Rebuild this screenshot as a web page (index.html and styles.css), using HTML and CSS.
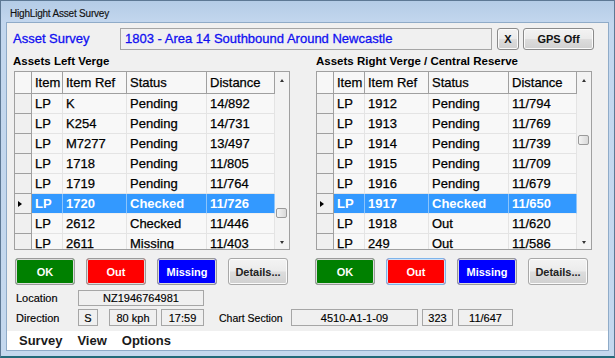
FILE: index.html
```html
<!DOCTYPE html>
<html lang="en">
<head>
<meta charset="utf-8">
<title>HighLight Asset Survey</title>
<link rel="stylesheet" href="styles.css">
</head>
<body>
<div class="window">
  <div class="titlebar"><span class="title">HighLight Asset Survey</span></div>
  <div class="client">
    <div class="toprow">
      <span class="survey-label">Asset Survey</span>
      <div class="survey-box">1803 - Area 14 Southbound Around Newcastle</div>
      <button class="btn btn-x">X</button>
      <button class="btn btn-gps">GPS Off</button>
    </div>

    <div class="panels">
      <section class="panel panel-left">
        <div class="panel-title">Assets Left Verge</div>
        <div class="grid">
          <div class="grid-view">
            <div class="grow ghead"><div class="rh"></div><div class="gc">Item</div><div class="gc">Item Ref</div><div class="gc">Status</div><div class="gc">Distance</div></div>
            <div class="grow"><div class="rh"></div><div class="gc">LP</div><div class="gc">K</div><div class="gc">Pending</div><div class="gc">14/892</div></div>
            <div class="grow"><div class="rh"></div><div class="gc">LP</div><div class="gc">K254</div><div class="gc">Pending</div><div class="gc">14/731</div></div>
            <div class="grow"><div class="rh"></div><div class="gc">LP</div><div class="gc">M7277</div><div class="gc">Pending</div><div class="gc">13/497</div></div>
            <div class="grow"><div class="rh"></div><div class="gc">LP</div><div class="gc">1718</div><div class="gc">Pending</div><div class="gc">11/805</div></div>
            <div class="grow"><div class="rh"></div><div class="gc">LP</div><div class="gc">1719</div><div class="gc">Pending</div><div class="gc">11/764</div></div>
            <div class="grow selected"><div class="rh"><span class="cur"></span></div><div class="gc">LP</div><div class="gc">1720</div><div class="gc">Checked</div><div class="gc">11/726</div></div>
            <div class="grow"><div class="rh"></div><div class="gc">LP</div><div class="gc">2612</div><div class="gc">Checked</div><div class="gc">11/446</div></div>
            <div class="grow"><div class="rh"></div><div class="gc">LP</div><div class="gc">2611</div><div class="gc">Missing</div><div class="gc">11/403</div></div>
          </div>
          <div class="vscroll">
            <div class="sb-arrow"><span class="tri-up"></span></div>
            <div class="sb-track"><div class="sb-thumb" style="margin-top:119px"></div></div>
            <div class="sb-arrow"><span class="tri-down"></span></div>
          </div>
        </div>
        <div class="actions">
          <button class="sbtn ok">OK</button>
          <button class="sbtn out">Out</button>
          <button class="sbtn missing">Missing</button>
          <button class="btn details">Details...</button>
        </div>
      </section>

      <section class="panel panel-right">
        <div class="panel-title">Assets Right Verge / Central Reserve</div>
        <div class="grid">
          <div class="grid-view">
            <div class="grow ghead"><div class="rh"></div><div class="gc">Item</div><div class="gc">Item Ref</div><div class="gc">Status</div><div class="gc">Distance</div></div>
            <div class="grow"><div class="rh"></div><div class="gc">LP</div><div class="gc">1912</div><div class="gc">Pending</div><div class="gc">11/794</div></div>
            <div class="grow"><div class="rh"></div><div class="gc">LP</div><div class="gc">1913</div><div class="gc">Pending</div><div class="gc">11/769</div></div>
            <div class="grow"><div class="rh"></div><div class="gc">LP</div><div class="gc">1914</div><div class="gc">Pending</div><div class="gc">11/739</div></div>
            <div class="grow"><div class="rh"></div><div class="gc">LP</div><div class="gc">1915</div><div class="gc">Pending</div><div class="gc">11/709</div></div>
            <div class="grow"><div class="rh"></div><div class="gc">LP</div><div class="gc">1916</div><div class="gc">Pending</div><div class="gc">11/679</div></div>
            <div class="grow selected"><div class="rh"><span class="cur"></span></div><div class="gc">LP</div><div class="gc">1917</div><div class="gc">Checked</div><div class="gc">11/650</div></div>
            <div class="grow"><div class="rh"></div><div class="gc">LP</div><div class="gc">1918</div><div class="gc">Out</div><div class="gc">11/620</div></div>
            <div class="grow"><div class="rh"></div><div class="gc">LP</div><div class="gc">249</div><div class="gc">Out</div><div class="gc">11/586</div></div>
          </div>
          <div class="vscroll">
            <div class="sb-arrow"><span class="tri-up"></span></div>
            <div class="sb-track"><div class="sb-thumb" style="margin-top:46px"></div></div>
            <div class="sb-arrow"><span class="tri-down"></span></div>
          </div>
        </div>
        <div class="actions">
          <button class="sbtn ok">OK</button>
          <button class="sbtn out focus">Out</button>
          <button class="sbtn missing">Missing</button>
          <button class="btn details">Details...</button>
        </div>
      </section>
    </div>

    <div class="info-row row-location">
      <span class="info-label">Location</span>
      <span class="field f-location">NZ1946764981</span>
    </div>
    <div class="info-row row-direction">
      <span class="info-label">Direction</span>
      <span class="field f-dir">S</span>
      <span class="field f-speed">80 kph</span>
      <span class="field f-time">17:59</span>
      <span class="info-label chart-label">Chart Section</span>
      <span class="field f-chart">4510-A1-1-09</span>
      <span class="field f-num">323</span>
      <span class="field f-dist">11/647</span>
    </div>

    <nav class="menubar">
      <span class="menu-item">Survey</span>
      <span class="menu-item">View</span>
      <span class="menu-item">Options</span>
    </nav>
  </div>
</div>
</body>
</html>
```

FILE: styles.css
```css
html, body {
  margin: 0;
  padding: 0;
  background: #c4d8ee;
}

body {
  font-family: "Liberation Sans", Arial, sans-serif;
  color: #000;
}

.window {
  width: 615px;
  height: 358px;
  box-sizing: border-box;
  border: 1px solid #5d7894;
  border-bottom: 2px solid #236a7a;
  background: linear-gradient(#b4cce6 0px, #c3d7ee 22px, #c4d8ee 100%);
  display: flex;
  flex-direction: column;
}

.titlebar {
  height: 22px;
  padding-left: 9px;
  display: flex;
  align-items: center;
  padding-top: 2px;
  box-sizing: border-box;
}

.title {
  font-size: 10px;
  letter-spacing: -0.2px;
  color: #111;
  -webkit-text-stroke: 0.15px #111;
}

.client {
  margin: 0 6px 6px 6px;
  height: 327px;
  box-sizing: border-box;
  background: #f0f0f0;
  box-shadow: 0 0 0 1px #8fabc8;
  padding-top: 5px;
  display: flex;
  flex-direction: column;
}

/* top row */
.toprow {
  display: flex;
  height: 22px;
  padding-left: 6px;
  align-items: stretch;
}

.survey-label {
  width: 107px;
  font-size: 13px;
  line-height: 22px;
  color: #1010f0;
  -webkit-text-stroke: 0.3px #1010f0;
}

.survey-box {
  width: 372px;
  box-sizing: border-box;
  border: 1px solid #a5a5a5;
  background: #f0f0f0;
  font-size: 13px;
  line-height: 20px;
  color: #1010f0;
  -webkit-text-stroke: 0.3px #1010f0;
  padding-left: 4px;
  white-space: nowrap;
}

.btn {
  font-family: "Liberation Sans", Arial, sans-serif;
  border: 1px solid #8a8a8a;
  border-radius: 3px;
  background: linear-gradient(#f3f3f3 0%, #ebebeb 48%, #dddddd 52%, #d0d0d0 100%);
  box-shadow: inset 0 0 0 1px #fbfbfb;
  font-size: 11px;
  font-weight: bold;
  color: #111;
  padding: 0;
  box-sizing: border-box;
  margin: 0;
}

.btn-x {
  width: 22px;
  margin-left: 5px;
}

.btn-gps {
  width: 71px;
  margin-left: 4px;
}

/* panels */
.panels {
  display: flex;
  margin-top: 2px;
  padding-left: 6px;
}

.panel {
  width: 277px;
  display: flex;
  flex-direction: column;
}

.panel-right {
  margin-left: 25px;
}

.panel-title {
  height: 19px;
  line-height: 19px;
  font-size: 11.5px;
  font-weight: bold;
  white-space: nowrap;
}

.panel-right .panel-title {
  padding-left: 1px;
}

.grid {
  margin-left: 1px;
  width: 276px;
  height: 179px;
  box-sizing: border-box;
  border: 1px solid #a0a0a0;
  display: flex;
  background: #ababab;
}

.grid-view {
  width: 260px;
  overflow: hidden;
}

.grow {
  display: grid;
  grid-template-columns: 17px 31px 64px 80px 68px;
  height: 20px;
}

.grow.ghead {
  height: 22px;
}

.rh {
  box-sizing: border-box;
  background: #f0f0f0;
  border-right: 1px solid #a0a0a0;
  border-bottom: 1px solid #a0a0a0;
  display: flex;
  align-items: center;
  padding-left: 3px;
}

.gc {
  box-sizing: border-box;
  background: #f8f8f8;
  border-right: 1px solid #e4e4e4;
  border-bottom: 1px solid #e4e4e4;
  font-size: 13px;
  line-height: 19px;
  padding-left: 3px;
  white-space: nowrap;
  overflow: hidden;
  -webkit-text-stroke: 0.25px #000;
}

.ghead .gc {
  background: #f7f7f7;
  border-right: 1px solid #a0a0a0;
  border-bottom: 1px solid #a0a0a0;
  line-height: 21px;
}

.ghead .rh {
  background: #f7f7f7;
}

.selected .gc {
  background: #3399ff;
  color: #fff;
  font-weight: bold;
  -webkit-text-stroke: 0;
  border-right-color: #8cc4fb;
  border-bottom-color: #f0f0f0;
}

.cur {
  width: 0;
  height: 0;
  border-left: 4px solid #000;
  border-top: 3.5px solid transparent;
  border-bottom: 3.5px solid transparent;
}

/* scrollbar */
.vscroll {
  width: 14px;
  background: #f3f3f3;
  display: flex;
  flex-direction: column;
}

.sb-arrow {
  height: 17px;
  display: flex;
  align-items: center;
  justify-content: center;
}

.sb-track {
  flex: 1;
}

.sb-thumb {
  width: 11px;
  height: 10px;
  margin-left: 1px;
  box-sizing: border-box;
  border: 1px solid #9a9a9a;
  border-radius: 2px;
  background: linear-gradient(90deg, #f4f4f4, #e6e6e6 50%, #d9d9d9);
}

.tri-up {
  width: 0;
  height: 0;
  border-bottom: 3px solid #333;
  border-left: 2.5px solid transparent;
  border-right: 2.5px solid transparent;
}

.tri-down {
  width: 0;
  height: 0;
  border-top: 3px solid #333;
  border-left: 2.5px solid transparent;
  border-right: 2.5px solid transparent;
  margin-top: 4px;
}

/* action buttons */
.actions {
  display: flex;
  gap: 11px;
  margin-top: 8px;
  height: 27px;
}

.panel-left .actions {
  padding-left: 2px;
}

.sbtn {
  width: 60px;
  height: 27px;
  box-sizing: border-box;
  margin: 0;
  padding: 0;
  border: 1px solid #9a9a9a;
  border-radius: 3px;
  box-shadow: inset 0 0 0 1px #dcdcdc;
  font-family: "Liberation Sans", Arial, sans-serif;
  font-size: 11px;
  font-weight: bold;
  color: #fff;
}

.sbtn.ok {
  background: #008000;
}

.sbtn.out {
  background: #ff0000;
}

.sbtn.missing {
  background: #0000ff;
}

.sbtn.focus {
  border-color: #7eb4ea;
  box-shadow: inset 0 0 0 1px #cfe3f8;
}

.details {
  width: 60px;
  height: 27px;
  font-weight: bold;
  color: #222;
  border-color: #a8a8a8;
}

/* info rows */
.info-row {
  display: flex;
  align-items: stretch;
  padding-left: 9px;
  font-size: 11px;
  -webkit-text-stroke: 0.15px #000;
}

.row-location {
  margin-top: 5px;
  height: 16px;
}

.row-direction {
  margin-top: 3px;
  height: 17px;
}

.info-label {
  width: 62px;
  display: flex;
  align-items: center;
  white-space: nowrap;
}

.chart-label {
  width: 72px;
  margin-left: 15px;
  font-size: 10.5px;
}

.field {
  box-sizing: border-box;
  border: 1px solid #a6a6a6;
  display: flex;
  align-items: center;
  justify-content: center;
  white-space: nowrap;
}

.f-location { width: 126px; }
.f-dir { width: 20px; }
.f-speed { width: 48px; margin-left: 11px; }
.f-time { width: 43px; margin-left: 4px; }
.f-chart { width: 127px; }
.f-num { width: 31px; margin-left: 4px; }
.f-dist { width: 55px; margin-left: 5px; }

/* menu */
.menubar {
  margin-top: 5px;
  height: 19px;
  background: #fff;
  display: flex;
  align-items: center;
  padding-left: 12px;
  gap: 15px;
  font-size: 13px;
  font-weight: bold;
  color: #1a1a1a;
}
```
